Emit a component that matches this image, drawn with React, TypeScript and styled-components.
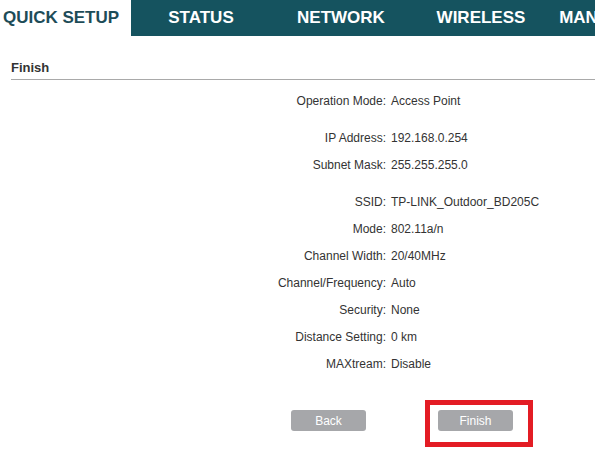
import * as React from "react";
import styled, { createGlobalStyle } from "styled-components";

const GlobalStyle = createGlobalStyle`
  html, body {
    margin: 0;
    padding: 0;
    background: #ffffff;
    overflow: hidden;
  }
  body {
    font-family: "Liberation Sans", Arial, sans-serif;
    color: #333333;
  }
`;

const Page = styled.div`
  width: 595px;
  height: 470px;
  overflow: hidden;
`;

const NavBar = styled.div`
  display: flex;
  height: 36px;
  background: #15535f;
  overflow: hidden;
`;

const Tab = styled.div<{ $active?: boolean }>`
  flex: 0 0 140px;
  display: flex;
  align-items: center;
  justify-content: center;
  white-space: nowrap;
  font-size: 17px;
  font-weight: bold;
  color: ${(p) => (p.$active ? "#1d4c58" : "#ffffff")};
  background: ${(p) => (p.$active ? "#ffffff" : "transparent")};

  &:first-child {
    margin-left: -9px;
  }
`;

const Content = styled.div`
  padding-left: 11px;
`;

const Header = styled.div`
  margin-top: 20px;
  height: 23px;
  line-height: 23px;
  font-size: 13px;
  font-weight: bold;
  color: #333333;
  border-bottom: 1px solid #a9a9a9;
`;

const Summary = styled.div`
  margin-top: 8px;
`;

const Group = styled.div`
  & + & {
    margin-top: 10px;
  }
`;

const Row = styled.div`
  display: grid;
  grid-template-columns: 375px 1fr;
  height: 27px;
  line-height: 27px;
  font-size: 12px;
  color: #333333;
`;

const Label = styled.div`
  text-align: right;
  white-space: nowrap;
`;

const Value = styled.div`
  padding-left: 5px;
  white-space: nowrap;
`;

const Actions = styled.div`
  display: flex;
  gap: 72px;
  margin-top: 32px;
  padding-left: 280px;
`;

const Button = styled.button`
  width: 75px;
  height: 21px;
  padding: 0;
  border: none;
  border-radius: 3px;
  background: #a6a7aa;
  color: #ffffff;
  font-family: "Liberation Sans", Arial, sans-serif;
  font-size: 12px;
  cursor: pointer;
`;

const Highlighted = styled.div`
  position: relative;
`;

const Annotation = styled.div`
  position: absolute;
  left: -13px;
  top: -10px;
  width: 108px;
  height: 47px;
  box-sizing: border-box;
  border: 5px solid #e31c24;
  pointer-events: none;
`;

const tabs = ["QUICK SETUP", "STATUS", "NETWORK", "WIRELESS", "MANAGEMENT"];

const groups: [string, string][][] = [
  [["Operation Mode:", "Access Point"]],
  [
    ["IP Address:", "192.168.0.254"],
    ["Subnet Mask:", "255.255.255.0"],
  ],
  [
    ["SSID:", "TP-LINK_Outdoor_BD205C"],
    ["Mode:", "802.11a/n"],
    ["Channel Width:", "20/40MHz"],
    ["Channel/Frequency:", "Auto"],
    ["Security:", "None"],
    ["Distance Setting:", "0 km"],
    ["MAXtream:", "Disable"],
  ],
];

export default function App() {
  return (
    <Page>
      <GlobalStyle />
      <NavBar>
        {tabs.map((t, i) => (
          <Tab key={t} $active={i === 0}>
            {t}
          </Tab>
        ))}
      </NavBar>
      <Content>
        <Header>Finish</Header>
        <Summary>
          {groups.map((g, gi) => (
            <Group key={gi}>
              {g.map(([label, value]) => (
                <Row key={label}>
                  <Label>{label}</Label>
                  <Value>{value}</Value>
                </Row>
              ))}
            </Group>
          ))}
        </Summary>
        <Actions>
          <Button>Back</Button>
          <Highlighted>
            <Button>Finish</Button>
            <Annotation />
          </Highlighted>
        </Actions>
      </Content>
    </Page>
  );
}
